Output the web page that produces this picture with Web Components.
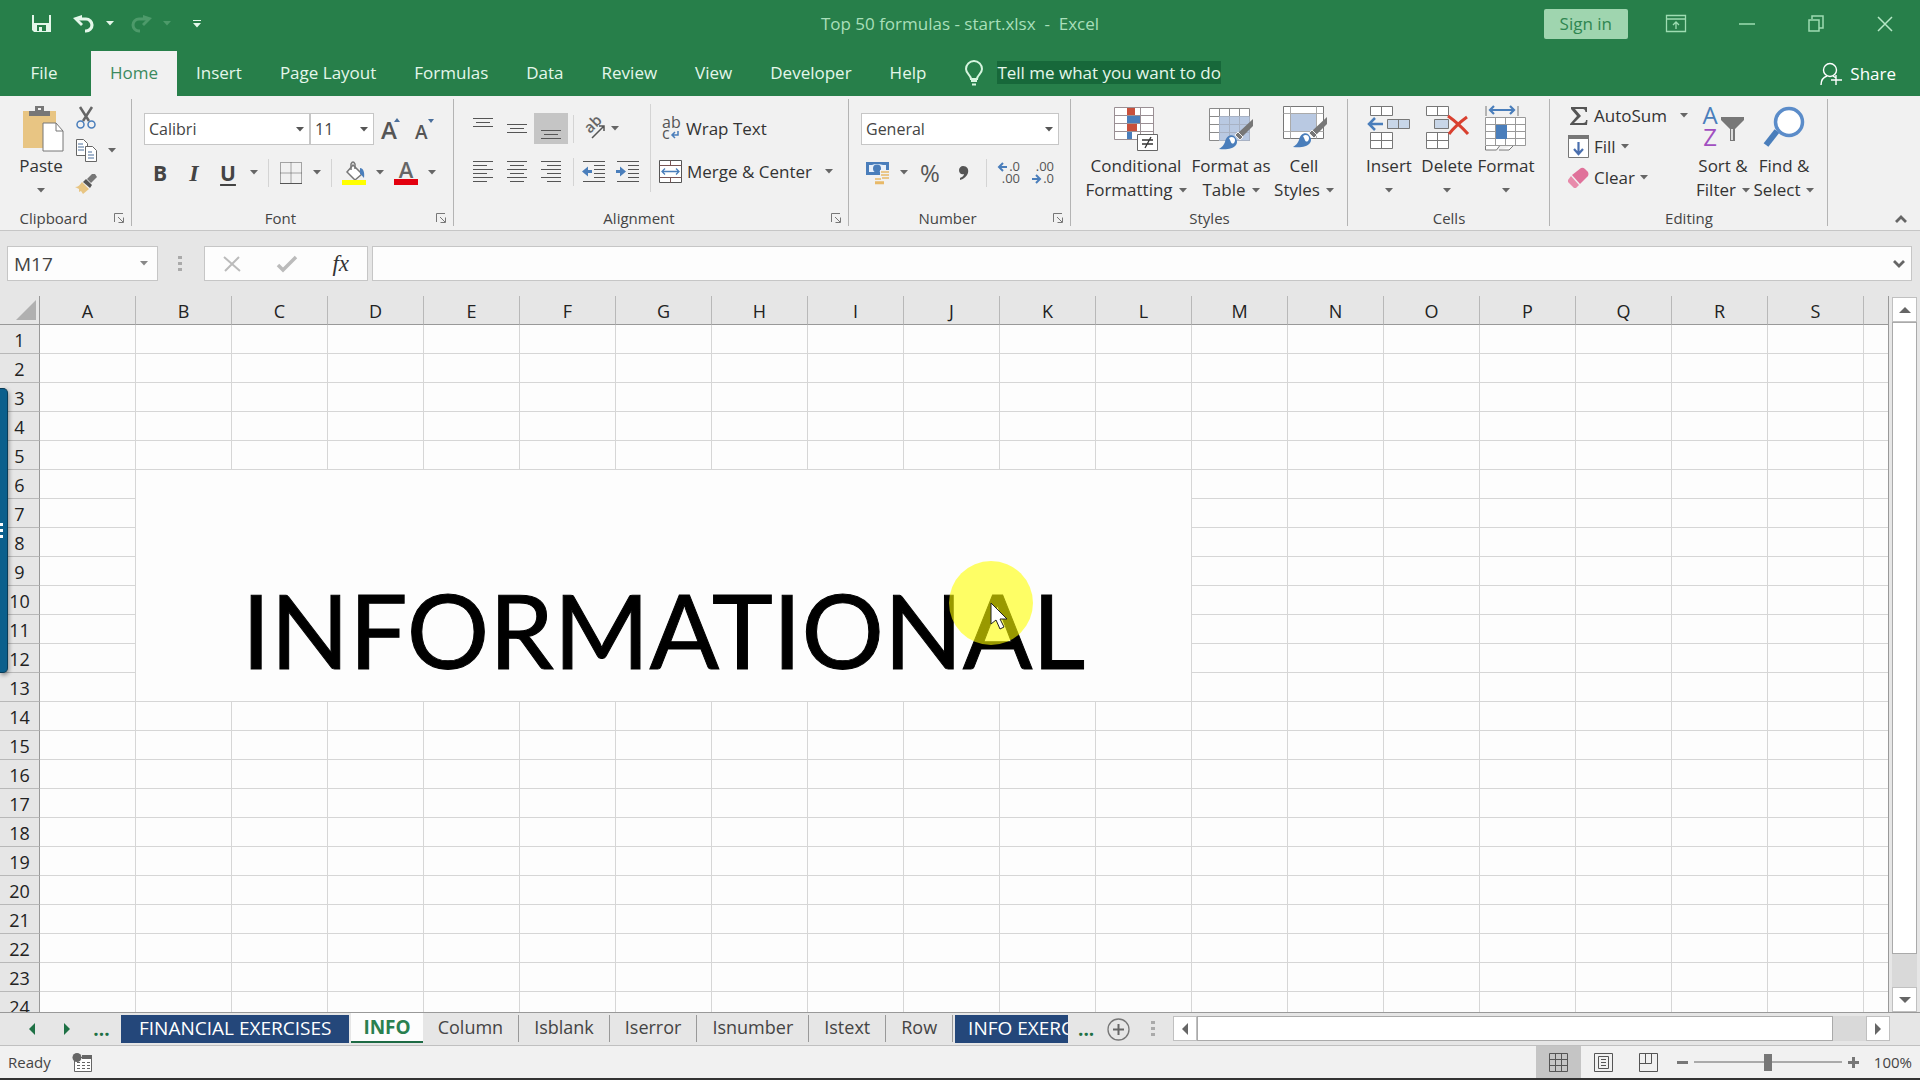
<!DOCTYPE html>
<html lang="en">
<head>
<meta charset="utf-8">
<title>Top 50 formulas - start.xlsx - Excel</title>
<style>
  :root {
    --green: #277f4a;
    --ribbon: #f1f1f1;
    --chrome: #e6e6e6;
    --ink: #333;
    --line: #c6c6c6;
    --ui: "Open Sans", "Noto Sans", sans-serif;
  }
  body {
    margin: 0;
    height: 100vh;
    overflow: hidden;
    font-family: var(--ui);
    font-size: 17px;
    color: var(--ink);
  }
</style>
</head>
<body>
<excel-window></excel-window>

<script>
const grid = (x, y, w, h, cols, rows) => {
  let d = `M${x} ${y}h${w}v${h}h${-w}z`;
  for (let i = 1; i < cols; i++) d += `M${x + (w / cols) * i} ${y}v${h}`;
  for (let i = 1; i < rows; i++) d += `M${x} ${y + (h / rows) * i}h${w}`;
  return d;
};

const lines = (list) =>
  `<path d="${list.map(([x, y, w]) => `M${x} ${y}h${w}`).join("")}" stroke="#555" fill="none"/>`;

const brush = `
  <path d="M42 12v7L31 30l-4-4z" fill="#777"/>
  <path d="M27 25l5 5-3 3-5-5z" fill="#777" stroke="#f1f1f1"/>
  <path d="M23 29c-4-2-8 1-9 6-1 3-3 5-6 7 7 1 14 0 17-4 2-3 1-6-2-9z" fill="#4a7ebb"/>
  <path d="M18 31c4-3 8 1 5 5-3 2-3-2-5-5z" fill="#fff"/>`;

// name: [width, height, markup]
const icons = {
  caret: [8, 5, `<path d="M0 0h8L4 4.5z" fill="currentColor"/>`],
  save: [19, 17, `<path fill-rule="evenodd" fill="#e4f7ea" d="M0 0h2v8h15V0h2v17H2l-2-2zM5 10v6h2v-4h3v4h4v-6z"/>`],
  undo: [22, 18, `<path d="M5 4h8a5.500 5.500 0 0 1 0 12h-1" fill="none" stroke="#e4f7ea" stroke-width="3.200"/><path d="M0 3L9 0v3l-3 2 4 4-2 2z" fill="#e4f7ea"/>`],
  redo: [22, 18, `<path d="M17 4H9a5.500 5.500 0 0 0 0 12h1" fill="none" stroke="#4d9a6a" stroke-width="3"/><path d="M22 3l-9-3v3l3 2-4 4 2 2z" fill="#4d9a6a"/>`],
  customize: [8, 8, `<path d="M0 0h8v1H0zM0 3h8L4 7.500z" fill="#e4f7ea"/>`],
  display: [20, 17, `<path d="M.5.5h19v16H.5zM.5 4h19M10 14V7M7 10l3-3 3 3" fill="none" stroke="#9edcb2" stroke-width="1.300"/>`],
  minimize: [16, 2, `<path d="M0 1h16" stroke="#9edcb2" stroke-width="1.500"/>`],
  restore: [16, 17, `<path d="M1 5h10v11H1zM4 4V1h11v12h-4" fill="none" stroke="#9edcb2" stroke-width="1.500"/>`],
  close: [16, 16, `<path d="M1 1l14 14M15 1L1 15" stroke="#b6e8c6" stroke-width="1.500"/>`],
  bulb: [20, 26, `<path d="M7 19c0-4-5-5-5-10a8 8 0 0 1 16 0c0 5-5 6-5 10z" fill="none" stroke="#d6f5df" stroke-width="2"/><path d="M7 21h6M8 24.500h4" stroke="#d6f5df" stroke-width="2"/>`],
  share: [22, 24, `<circle cx="10" cy="8" r="6.500" fill="none" stroke="#fff" stroke-width="1.400"/><path d="M1 23c0-5 3-8 6-9M13 14l3 2M16 13v10M11 18h11" fill="none" stroke="#fff" stroke-width="1.400"/>`],

  paste: [44, 46, `
    <path d="M4 5h33v37H4z" fill="#e8c583"/>
    <path d="M10 5h6V0h9v5h6v5H10z" fill="#777"/><path d="M19 2h3v2h-3z" fill="#f1f1f1"/>
    <path d="M24 17h13l7 8v20H24z" fill="#fff" stroke="#777"/><path d="M37 17v8h7" fill="none" stroke="#777"/>`],
  cut: [20, 22, `<path d="M4 0l9 14M16 0L7 14" stroke="#666" stroke-width="2.500"/><circle cx="4.500" cy="17.500" r="3.500" fill="none" stroke="#4a7ebb" stroke-width="1.500"/><circle cx="15.500" cy="17.500" r="3.500" fill="none" stroke="#4a7ebb" stroke-width="1.500"/>`],
  copy: [21, 23, `<g fill="#fff" stroke="#666"><path d="M.5.5h7l4 4v12H.5z"/><path d="M9.500 7.500h7l4 4v11h-11z"/></g><path d="M2 5h5M2 8h6M2 11h6M12 13h4M12 16h6M12 19h6" stroke="#4a6f9c"/>`],
  painter: [22, 20, `<path d="M17 0h3l2 3-6 6-4-4z" fill="#777"/><path d="M11 5l6 6-2 3-7-6z" fill="#555"/><path d="M7 8l7 7-6 5-2-3-2 1v-3l-4-2c3 0 5-2 7-5z" fill="#e8c583"/>`],
  grow: [20, 24, `<text x="0" y="22" font-size="24" font-weight="600" fill="#555">A</text><path d="M13 5h6l-3-4z" fill="#4a6f9c"/>`],
  shrink: [20, 24, `<text x="0" y="22" font-size="19" font-weight="600" fill="#555">A</text><path d="M13 2h6l-3 4z" fill="#4a6f9c"/>`],
  borders: [22, 22, `<path d="${grid(.5, .5, 21, 21, 2, 2)}" fill="none" stroke="#555" stroke-dasharray="1 1"/><path d="M0 21.500h22" stroke="#555"/>`],
  fill: [26, 24, `
    <path d="M12 4l9 9-7 6-8-8z" fill="#fff" stroke="#777" stroke-width="1.500"/>
    <path d="M10 9V3q2-4 4 0v5" fill="none" stroke="#777" stroke-width="1.500"/>
    <path d="M19 7c3 0 5 4 4 10-2-2-3-4-4-4z" fill="#4a7ebb"/><path d="M1 19h24v5H1z" fill="#ff0"/>`],
  color: [24, 24, `<text x="12" y="17" text-anchor="middle" font-size="22" font-weight="600" fill="#666">A</text><path d="M0 18h24v6H0z" fill="#e3000f"/>`],
  top: [22, 26, lines([[1, 2.5, 20], [4, 6.5, 14], [1, 10.5, 20]])],
  middle: [22, 26, lines([[1, 8.5, 20], [4, 12.5, 14], [1, 16.5, 20]])],
  bottom: [22, 26, lines([[1, 14.5, 20], [4, 18.5, 14], [1, 22.5, 20]])],
  left: [22, 22, lines([[1, .5, 20], [1, 4.5, 14], [1, 8.5, 20], [1, 12.5, 14], [1, 16.5, 20], [1, 20.5, 14]])],
  center: [22, 22, lines([[1, .5, 20], [4, 4.5, 14], [1, 8.5, 20], [4, 12.5, 14], [1, 16.5, 20], [4, 20.5, 14]])],
  right: [22, 22, lines([[1, .5, 20], [7, 4.5, 14], [1, 8.5, 20], [7, 12.5, 14], [1, 16.5, 20], [7, 20.5, 14]])],
  orient: [22, 20, `<text transform="translate(6 15) rotate(-45)" font-size="15" font-weight="600" fill="#666">ab</text><path d="M8 19L20 7M15 7h5v5" fill="none" stroke="#555" stroke-width="1.500"/>`],
  outdent: [24, 22, lines([[1, .5, 22], [12, 4.5, 11], [12, 8.5, 11], [12, 12.5, 11], [12, 16.5, 11], [1, 20.5, 22]]) + `<path d="M0 10.500l6-5v3.500h4v3H6v3.500z" fill="#4a7ebb"/>`],
  indent: [24, 22, lines([[1, .5, 22], [12, 4.5, 11], [12, 8.5, 11], [12, 12.5, 11], [12, 16.5, 11], [1, 20.5, 22]]) + `<path d="M10 10.500l-6-5v3.500H0v3h4v3.500z" fill="#4a7ebb"/>`],
  wrap: [22, 24, `<g font-size="16" fill="#555"><text x="3" y="11">ab</text><text x="3" y="22">c</text></g><path d="M19 14v4h-6M16 15l-3 3 3 3" fill="none" stroke="#4a7ebb" stroke-width="1.500"/>`],
  merge: [23, 23, `<path d="M.5.5h22v22H.5z" fill="#fff" stroke="#555"/><path d="M.5 5.500h22M.5 17.500h22M11.500.5v5M11.500 17.500v5" stroke="#7a5555"/><path d="M3 11.500h17M6 8.500l-3 3 3 3M17 8.500l3 3-3 3" fill="none" stroke="#4a7ebb" stroke-width="1.300"/>`],
  money: [24, 22, `<path d="M0 0h23v13H0z" fill="#4a7ebb"/><path d="M3 3h3q4-2 11 0h3v7H3z" fill="#e8f0fa"/><circle cx="11" cy="6.500" r="4" fill="#4a7ebb"/><path d="M14 8h10v14H9v-6h5z" fill="#f1f1f1"/><path d="M15 10h8M15 13h8M9 17h6M16 16h7M9 20h9M9 21.500h9" stroke="#e8b968" stroke-width="1.700"/>`],
  comma: [12, 14, `<path d="M5 0c4 0 6 3 5 7-1 3-4 6-8 7v-2c2-1 4-2 4-4-3 1-5-1-5-4 0-2 2-4 4-4z" fill="#555"/>`],
  moredec: [24, 24, `<g font-size="13" fill="#555" text-anchor="end"><text x="23" y="10">.0</text><text x="23" y="22">.00</text></g><path d="M10 6H3M6 2L2 6l4 4" fill="none" stroke="#4a7ebb" stroke-width="2"/>`],
  lessdec: [24, 24, `<g font-size="13" fill="#555" text-anchor="end"><text x="23" y="10">.00</text><text x="23" y="22">.0</text></g><path d="M1 18h7M5 14l4 4-4 4" fill="none" stroke="#4a7ebb" stroke-width="2"/>`],
  conditional: [44, 45, `
    <path d="${grid(.5, 1.5, 39, 32, 3, 4)}" fill="#fff" stroke="#9a8f94"/>
    <path d="M13 2h8v7h-8zM13 18h10v7H13z" fill="#c8503c"/><path d="M13 10h13v7H13zM13 26h5v7h-5z" fill="#4a7ebb"/>
    <path d="M23.500 28.500h20v16h-20z" fill="#fff" stroke="#666"/>
    <path d="M28 34h11M28 38h11M37 31l-6 11" stroke="#333" stroke-width="1.300"/>`],
  fortable: [46, 44, `<path d="${grid(1.5, 2.5, 40, 32, 4, 4)}" fill="#fff" stroke="#8a8a8a"/><path d="M11 11h30v24H11z" fill="#b9c9e2"/><path d="${grid(11.5, 10.5, 30, 24, 3, 3)}" fill="none" stroke="#a8b2c4"/><g transform="translate(3 1)">${brush}</g>`],
  cellstyles: [46, 44, `<path d="M2.500.5h40v32h-40z" fill="#fff" stroke="#777"/><path d="M9.500.5v32M35.500.5v32M2.500 7.500h40M2.500 25.500h40" stroke="#aaa"/><path d="M10 8h25v17H10z" fill="#b9c9e2"/><g transform="translate(4 -1)">${brush}</g>`],
  insert: [44, 44, `<path d="${grid(3.5, .5, 22, 9, 2, 1)}${grid(3.5, 26.5, 22, 16, 2, 2)}" fill="#fff" stroke="#777"/><path d="${grid(20.5, 13.5, 22, 9, 2, 1)}" fill="#c8d6e8" stroke="#777"/><path d="M16 18H3M8 12l-6 6 6 6" fill="none" stroke="#4a7ebb" stroke-width="2.500"/>`],
  delete: [44, 44, `<path d="${grid(1.5, .5, 22, 9, 2, 1)}${grid(1.5, 26.5, 22, 16, 2, 2)}" fill="#fff" stroke="#777"/><path d="M9.500 13.500h14v9h-14z" fill="#c8d6e8" stroke="#777"/><path d="M23 10q10 7 20 18M42 11Q31 19 24 28" fill="none" stroke="#d9402f" stroke-width="3"/>`],
  format: [42, 46, `<path d="${grid(.5, 11.5, 40, 28, 4, 4)}" fill="#fff" stroke="#999"/><path d="M11 19h11v14H11z" fill="#4a7ebb"/><path d="M1 0v10M33 0v10" stroke="#777"/><path d="M5 4h24M9 0L5 4l4 4M25 0l4 4-4 4" fill="none" stroke="#4a7ebb" stroke-width="2.200"/><path d="M.5 40v4h11l3-4M14 44h10l4-4" fill="#fff" stroke="#777"/>`],
  sum: [21, 20, `<path d="M3 1h16v5h-1.500Q17 3 15 3H7l6 7-7 7h9q3 0 3-3h1.500L19 19H2v-1l7-8L3 3z" fill="#555"/>`],
  filldown: [21, 23, `<path d="M.5.5h20v22H.5z" fill="#fff" stroke="#777"/><path d="M0 0h21v4H0z" fill="#777"/><path d="M10.500 7v12M6 14l4.500 5 4.500-5" fill="none" stroke="#4a6fae" stroke-width="2.200"/>`],
  eraser: [21, 20, `<path d="M13 0q2-1 4 1l3 3q1 2 0 4l-8 8-8-9z" fill="#e0719a"/><path d="M3 8l8 9-3 3H6l-6-6v-2z" fill="#e88bab"/>`],
  sort: [42, 42, `<g text-anchor="middle" font-size="24"><text x="8" y="18" fill="#4a7ebb">A</text><text x="8" y="40" fill="#a14fc0">Z</text></g><path d="M19 11h23v3l-9 9v12h-5V23l-9-9z" fill="#777"/><path d="M29 23h2v11h-2z" fill="#ddd"/>`],
  find: [42, 42, `<path d="M14 25L3 39" stroke="#4a7ebb" stroke-width="6"/><circle cx="26" cy="16" r="13.500" fill="#fff" stroke="#5b8cc9" stroke-width="3.500"/>`],
  collapse: [14, 9, `<path d="M2 8l5-5 5 5" fill="none" stroke="#666" stroke-width="2.800"/>`],
  expand: [12, 9, `<path d="M1 2l5 5 5-5" fill="none" stroke="#666" stroke-width="2.800"/>`],
  launcher: [11, 10, `<path d="M.5 9V.5H9M4 4l5 5M9.500 4.500v5h-5" fill="none" stroke="#777"/>`],

  cancel: [18, 16, `<path d="M1 1l16 14M16 1L2 15" stroke="#bbb" stroke-width="2"/>`],
  check: [20, 16, `<path d="M1 9l5 5L19 1" fill="none" stroke="#bbb" stroke-width="3.500"/>`],
  dots: [4, 16, `<path d="M0 0h4v3H0zM0 6h4v3H0zM0 12h4v3H0z" fill="#aaa"/>`],
  prev: [6, 12, `<path d="M6 0v12L0 6z" fill="currentColor"/>`],
  next: [6, 12, `<path d="M0 0v12l6-6z" fill="currentColor"/>`],
  up: [12, 6, `<path d="M0 6h12L6 0z" fill="currentColor"/>`],
  down: [12, 6, `<path d="M0 0h12L6 6z" fill="currentColor"/>`],
  plus: [23, 23, `<circle cx="11.500" cy="11.500" r="10.500" fill="none" stroke="#777" stroke-width="1.300"/><path d="M6 11.500h11M11.500 6v11" stroke="#666" stroke-width="2"/>`],
  macro: [20, 19, `<path d="M2.500 4.500h17v14h-17z" fill="#fff" stroke="#666"/><path d="M10 2h10v4H10z" fill="#666"/><circle cx="5" cy="4.500" r="4.500" fill="#666"/><path d="M5 9.500h13M5 12.500h13M5 15.500h13" stroke="#666" stroke-dasharray="3 2"/>`],
  normal: [19, 19, `<path d="${grid(.5, .5, 18, 18, 3, 3)}" fill="none" stroke="#555"/>`],
  page: [19, 19, `<path d="M.5.5h18v18H.5zM4.500 3.500h10v12h-10zM7 6.500h5M7 9.500h5M7 12.500h5" fill="none" stroke="#555"/>`],
  breaks: [19, 19, `<path d="M.5.5h18v18H.5zM.5 10.500h12M6.500.5v10M12.500.5v10" fill="none" stroke="#555"/>`],
  minus: [11, 3, `<path d="M0 0h11v3H0z" fill="#777"/>`],
  add: [11, 11, `<path d="M0 4h11v3H0zM4 0h3v11H4z" fill="#777"/>`],
  pointer: [18, 28, `<path d="M1 1v21l5-4 4 9 4-2-4-8h7z" fill="#fff" stroke="#222"/>`],
};

class BaseElement extends HTMLElement {
  constructor() {
    super();
    this.attachShadow({ mode: "open" });
  }

  connectedCallback() {
    this.shadowRoot.innerHTML = this.render();
  }

  attr(name, fallback = "") {
    return this.getAttribute(name) ?? fallback;
  }
}

class UiIcon extends BaseElement {
  render() {
    const [w, h, body] = icons[this.attr("name")];
    return /* HTML */ `
      <style>
        :host { display: inline-flex; flex: none; }
        svg { display: block; overflow: visible; font-family: var(--ui); }
      </style>
      <svg width="${w}" height="${h}" viewBox="0 0 ${w} ${h}" aria-hidden="true">${body}</svg>
    `;
  }
}

const buttonReset = `
  button {
    margin: 0;
    padding: 0;
    border: 0;
    background: none;
    color: inherit;
    font: inherit;
    line-height: 24px;
    white-space: nowrap;
  }`;

/* Small ribbon button: icon and/or slotted text, optional caret */
class ToolButton extends BaseElement {
  render() {
    const icon = this.attr("icon");
    return /* HTML */ `
      <style>
        :host { display: flex; flex: none; width: 34px; height: 31px; }
        :host([narrow]) { width: 18px; }
        :host([wide]) { width: auto; }
        ${buttonReset}
        button { flex: 1; display: flex; align-items: center; justify-content: center; gap: 5px; }
        :host([pressed]) button { background: #c5c5c5; }
        .caret { color: #666; }
      </style>
      <button aria-label="${this.attr("label")}">
        ${icon ? `<ui-icon name="${icon}"></ui-icon>` : ""}
        <slot></slot>
        ${this.hasAttribute("caret") ? `<ui-icon class="caret" name="caret"></ui-icon>` : ""}
      </button>
    `;
  }
}

/* Tall ribbon button: icon over two lines, the second ends in a caret */
class BigButton extends BaseElement {
  render() {
    return /* HTML */ `
      <style>
        :host { display: flex; flex: none; }
        ${buttonReset}
        button { flex: 1; display: flex; flex-direction: column; align-items: center; padding-top: 10px; }
        .art { display: flex; align-items: flex-start; justify-content: center; height: 48px; }
        .second { display: flex; align-items: center; gap: 6px; height: 24px; }
        .caret { color: #666; }
      </style>
      <button>
        <span class="art"><ui-icon name="${this.attr("icon")}"></ui-icon></span>
        <slot></slot>
        <span class="second"><slot name="second"></slot><ui-icon class="caret" name="caret"></ui-icon></span>
      </button>
    `;
  }
}

class DropBox extends BaseElement {
  render() {
    return /* HTML */ `
      <style>
        :host { display: flex; position: relative; height: 32px; box-sizing: border-box; border: 1px solid var(--line); background: #fff; font-size: 16px; }
        select { flex: 1; min-width: 0; appearance: none; border: 0; padding: 0 4px; background: none; color: #444; font: inherit; }
        ui-icon { position: absolute; right: 5px; top: 13px; color: #555; pointer-events: none; }
      </style>
      <select aria-label="${this.attr("label")}"><option>${this.attr("value")}</option></select>
      <ui-icon name="caret"></ui-icon>
    `;
  }
}

class RibbonGroup extends BaseElement {
  render() {
    return /* HTML */ `
      <style>
        :host { display: flex; flex-direction: column; flex: none; box-sizing: border-box; position: relative; }
        :host::after { content: ""; position: absolute; right: 0; top: 3px; bottom: 4px; border-right: 1px solid #b4b4b4; }
        .body { flex: 1; display: flex; }
        footer { display: flex; align-items: center; height: 25px; font-size: 15px; color: #444; }
        .name { flex: 1; text-align: center; }
        ${buttonReset}
        button { display: flex; margin: 0 7px; }
      </style>
      <div class="body"><slot></slot></div>
      <footer>
        <span class="name">${this.attr("label")}</span>
        ${this.hasAttribute("launcher")
          ? `<button aria-label="${this.attr("label")} settings"><ui-icon name="launcher"></ui-icon></button>`
          : ""}
      </footer>
    `;
  }
}

class TitleBar extends BaseElement {
  render() {
    return /* HTML */ `
      <style>
        :host { display: grid; grid-template-columns: 1fr auto 1fr; align-items: center; height: 51px; padding: 0 27px 4px; box-sizing: border-box; color: #a9dfba; }
        ${buttonReset}
        button { display: flex; align-items: center; }
        .quick { display: flex; align-items: center; padding-left: 5px; color: #e4f7ea; }
        .quick .gap { margin-left: 22px; }
        .quick .drop { margin-left: 11px; }
        .quick .redo { margin-left: 16px; }
        .quick .off { color: #4d9a6a; }
        .title { white-space: pre; }
        .window { display: flex; justify-content: flex-end; align-items: center; gap: 53px; }
        .sign { height: 30px; padding: 0 16px; background: #9fd5af; color: #2f8651; border-radius: 2px; }
        .first { margin-left: -15px; }
      </style>
      <div class="quick">
        <button aria-label="Save"><ui-icon name="save"></ui-icon></button>
        <button class="gap" aria-label="Undo"><ui-icon name="undo"></ui-icon></button>
        <button class="drop" aria-label="Undo list"><ui-icon name="caret"></ui-icon></button>
        <button class="redo off" aria-label="Redo"><ui-icon name="redo"></ui-icon></button>
        <button class="drop off" aria-label="Redo list"><ui-icon name="caret"></ui-icon></button>
        <button class="gap" aria-label="Customize Quick Access Toolbar"><ui-icon name="customize"></ui-icon></button>
      </div>
      <div class="title">Top 50 formulas - start.xlsx  -  Excel</div>
      <div class="window">
        <button class="sign">Sign in</button>
        <button class="first" aria-label="Ribbon display options"><ui-icon name="display"></ui-icon></button>
        <button aria-label="Minimize"><ui-icon name="minimize"></ui-icon></button>
        <button aria-label="Restore"><ui-icon name="restore"></ui-icon></button>
        <button aria-label="Close"><ui-icon name="close"></ui-icon></button>
      </div>
    `;
  }
}

class RibbonTabs extends BaseElement {
  render() {
    const tabs = ["Home", "Insert", "Page Layout", "Formulas", "Data", "Review", "View", "Developer", "Help"];
    return /* HTML */ `
      <style>
        :host { display: flex; height: 45px; color: #e4f7ea; }
        ${buttonReset}
        button { display: flex; align-items: center; padding: 0 19px 2px; }
        .file { width: 88px; margin-right: 3px; justify-content: center; padding: 0 0 2px; }
        .on { background: var(--ribbon); color: #3c8a5e; }
        .tell { gap: 13px; }
        .tell span { background: #17683a; line-height: 23px; }
        .share { margin-left: auto; gap: 8px; padding: 0 24px 0 0; color: #fff; }
      </style>
      <button class="file">File</button>
      ${tabs.map((t, i) => `<button class="${i ? "" : "on"}">${t}</button>`).join("")}
      <button class="tell"><ui-icon name="bulb"></ui-icon><span>Tell me what you want to do</span></button>
      <button class="share"><ui-icon name="share"></ui-icon>Share</button>
    `;
  }
}

class RibbonHome extends BaseElement {
  render() {
    return /* HTML */ `
      <style>
        ${buttonReset}
        :host { display: flex; height: 134px; background: var(--ribbon); border-bottom: 1px solid var(--line); color: #333; }
        .col { display: flex; flex-direction: column; }
        .row { display: flex; align-items: center; }
        .two { gap: 12px; padding: 17px 0 0 12px; }
        .font { padding-left: 11px; }
        .three { padding-top: 4px; }
        .three .row { height: 31px; }
        .clip { padding-top: 5px; margin-left: -13px; }
        .clip .row { height: 33px; }
        .sep { flex: none; width: 1px; height: 28px; margin: 0 5px; background: #d4d4d4; }
        .tall { flex: none; width: 1px; height: 88px; margin-top: 8px; background: #d4d4d4; }
        .text { padding-left: 8px; align-items: flex-start; }
        .font .row:first-child { padding-left: 1px; }
        .char { font-size: 21px; font-weight: 700; color: #444; }
        .i { font-family: "Liberation Serif", serif; font-style: italic; font-size: 24px; }
        .u { text-decoration: underline; text-underline-offset: 3px; text-decoration-thickness: 2px; }
        .percent { font-size: 24px; color: #555; }
        .collapse { display: flex; margin: auto 12px 7px auto; }
      </style>

      <ribbon-group label="Clipboard" launcher style="width:132px">
        <big-button icon="paste" style="width:82px">Paste</big-button>
        <div class="col three clip">
          <div class="row"><tool-button icon="cut" label="Cut"></tool-button></div>
          <div class="row"><tool-button icon="copy" label="Copy"></tool-button><tool-button narrow caret label="Copy options"></tool-button></div>
          <div class="row"><tool-button icon="painter" label="Format Painter"></tool-button></div>
        </div>
      </ribbon-group>

      <ribbon-group label="Font" launcher style="width:322px">
        <div class="col two font">
          <div class="row">
            <drop-box label="Font" value="Calibri" style="width:166px"></drop-box>
            <drop-box label="Font size" value="11" style="width:64px"></drop-box>
            <tool-button icon="grow" label="Increase font size"></tool-button>
            <tool-button icon="shrink" label="Decrease font size"></tool-button>
          </div>
          <div class="row">
            <tool-button label="Bold"><span class="char">B</span></tool-button>
            <tool-button label="Italic"><span class="char i">I</span></tool-button>
            <tool-button label="Underline"><span class="char u">U</span></tool-button>
            <tool-button narrow caret label="Underline style"></tool-button>
            <span class="sep"></span>
            <tool-button icon="borders" label="Borders"></tool-button>
            <tool-button narrow caret label="Border style"></tool-button>
            <span class="sep"></span>
            <tool-button icon="fill" label="Fill color"></tool-button>
            <tool-button narrow caret label="Fill colors"></tool-button>
            <tool-button icon="color" label="Font color"></tool-button>
            <tool-button narrow caret label="Font colors"></tool-button>
          </div>
        </div>
      </ribbon-group>

      <ribbon-group label="Alignment" launcher style="width:395px">
        <div class="col two" style="width:184px">
          <div class="row">
            <tool-button icon="top" label="Top align"></tool-button>
            <tool-button icon="middle" label="Middle align"></tool-button>
            <tool-button icon="bottom" pressed label="Bottom align"></tool-button>
            <span class="sep"></span>
            <tool-button wide icon="orient" caret label="Orientation" style="margin-left:5px"></tool-button>
          </div>
          <div class="row">
            <tool-button icon="left" label="Align left"></tool-button>
            <tool-button icon="center" label="Center"></tool-button>
            <tool-button icon="right" label="Align right"></tool-button>
            <span class="sep" style="margin-right:3px"></span>
            <tool-button icon="outdent" label="Decrease indent"></tool-button>
            <tool-button icon="indent" label="Increase indent"></tool-button>
          </div>
        </div>
        <span class="tall"></span>
        <div class="col two text">
          <tool-button wide icon="wrap" label="Wrap Text">Wrap Text</tool-button>
          <div class="row"><tool-button wide icon="merge" label="Merge &amp; Center">Merge &amp; Center</tool-button><tool-button caret label="Merge options"></tool-button></div>
        </div>
      </ribbon-group>

      <ribbon-group label="Number" launcher style="width:222px">
        <div class="col two">
          <drop-box label="Number format" value="General" style="width:198px"></drop-box>
          <div class="row">
            <tool-button icon="money" label="Accounting format"></tool-button>
            <tool-button narrow caret label="Currencies"></tool-button>
            <tool-button label="Percent style"><span class="percent">%</span></tool-button>
            <tool-button icon="comma" label="Comma style"></tool-button>
            <span class="sep"></span>
            <tool-button icon="moredec" label="Increase decimal"></tool-button>
            <tool-button icon="lessdec" label="Decrease decimal"></tool-button>
          </div>
        </div>
      </ribbon-group>

      <ribbon-group label="Styles" style="width:277px">
        <big-button icon="conditional" style="width:108px;margin-left:11px">Conditional<span slot="second">Formatting</span></big-button>
        <big-button icon="fortable" style="width:82px">Format as<span slot="second">Table</span></big-button>
        <big-button icon="cellstyles" style="width:64px">Cell<span slot="second">Styles</span></big-button>
      </ribbon-group>

      <ribbon-group label="Cells" style="width:202px">
        <big-button icon="insert" style="width:58px;margin-left:12px">Insert</big-button>
        <big-button icon="delete" style="width:58px">Delete</big-button>
        <big-button icon="format" style="width:60px">Format</big-button>
      </ribbon-group>

      <ribbon-group label="Editing" style="width:278px">
        <div class="col three" style="width:144px;padding-left:18px;box-sizing:border-box">
          <div class="row"><tool-button wide icon="sum" label="AutoSum">AutoSum</tool-button><tool-button caret label="AutoSum options"></tool-button></div>
          <div class="row"><tool-button wide caret icon="filldown" label="Fill">Fill</tool-button></div>
          <div class="row"><tool-button wide caret icon="eraser" label="Clear">Clear</tool-button></div>
        </div>
        <big-button icon="sort" style="width:58px">Sort &amp;<span slot="second">Filter</span></big-button>
        <big-button icon="find" style="width:64px">Find &amp;<span slot="second">Select</span></big-button>
      </ribbon-group>

      <button class="collapse" aria-label="Collapse the ribbon"><ui-icon name="collapse"></ui-icon></button>
    `;
  }
}

class FormulaBar extends BaseElement {
  render() {
    return /* HTML */ `
      <style>
        :host { display: flex; align-items: center; height: 65px; padding: 0 8px 0 7px; }
        .box { display: flex; align-items: center; height: 35px; box-sizing: border-box; border: 1px solid var(--line); background: #fdfdfd; }
        .name { width: 151px; padding-right: 9px; }
        input { flex: 1; min-width: 0; padding: 0 6px; border: 0; outline: 0; background: none; color: #444; font: inherit; font-size: 19px; }
        .dots { margin: 0 22px 0 20px; }
        .tools { width: 164px; justify-content: space-around; }
        .formula { flex: 1; margin-left: 4px; padding-right: 6px; }
        .fx { font: italic 23px "Liberation Serif", serif; color: #333; }
        ${buttonReset}
        button { display: flex; }
      </style>
      <div class="box name">
        <input aria-label="Name Box" value="M17">
        <button aria-label="Names" style="color:#888"><ui-icon name="caret"></ui-icon></button>
      </div>
      <ui-icon class="dots" name="dots"></ui-icon>
      <div class="box tools">
        <button aria-label="Cancel"><ui-icon name="cancel"></ui-icon></button>
        <button aria-label="Enter"><ui-icon name="check"></ui-icon></button>
        <button aria-label="Insert Function"><span class="fx">fx</span></button>
      </div>
      <div class="box formula">
        <input aria-label="Formula Bar">
        <button aria-label="Expand formula bar"><ui-icon name="expand"></ui-icon></button>
      </div>
    `;
  }
}

class ScrollBar extends BaseElement {
  render() {
    const vertical = this.hasAttribute("vertical");
    return /* HTML */ `
      <style>
        :host { display: flex; height: 25px; }
        :host([vertical]) { flex-direction: column; width: 25px; height: auto; }
        ${buttonReset}
        button { flex: none; display: flex; align-items: center; justify-content: center; width: 24px; height: 25px; box-sizing: border-box; border: 1px solid #c0c0c0; background: #fff; color: #666; }
        :host([vertical]) button { width: 25px; }
        .track { flex: 1; display: flex; flex-direction: inherit; background: #d9d9d9; }
        .thumb { flex: 0 0 95%; box-sizing: border-box; border: 1px solid #aaa; background: #fff; }
      </style>
      <button aria-label="Scroll back"><ui-icon name="${vertical ? "up" : "prev"}"></ui-icon></button>
      <div class="track"><div class="thumb"></div></div>
      <button aria-label="Scroll forward"><ui-icon name="${vertical ? "down" : "next"}"></ui-icon></button>
    `;
  }
}

class SheetGrid extends BaseElement {
  rows() {
    let html = "";
    for (let r = 1; r <= 24; r++) {
      let cells = "";
      for (let c = 0; c < 20; c++) {
        const covered = r >= 6 && r <= 13 && c >= 1 && c <= 11;
        if (r === 6 && c === 1) {
          cells += `<td class="merged" colspan="11" rowspan="8"><slot></slot></td>`;
        } else if (!covered) {
          cells += "<td></td>";
        }
      }
      html += `<tr><th scope="row">${r}</th>${cells}</tr>`;
    }
    return html;
  }

  render() {
    const letters = [..."ABCDEFGHIJKLMNOPQRS"];
    return /* HTML */ `
      <style>
        :host { display: block; overflow: hidden; background: #fdfdfd; border-right: 1px solid #999; }
        table { width: 100%; table-layout: fixed; border-collapse: separate; border-spacing: 0; }
        col { width: 96px; }
        col.head { width: 40px; }
        col.rest { width: auto; }
        tr { height: 29px; }
        th, td { height: 29px; box-sizing: border-box; padding: 0; border: solid #d6d6d6; border-width: 0 1px 1px 0; }
        th { background: var(--chrome); color: #222; font-size: 18px; font-weight: 400; line-height: 26px; padding-top: 2px; text-align: center; border-color: #b8b8b8; }
        thead th { border-bottom-color: #999; }
        tbody th { border-right-color: #999; }
        tr > :last-child { border-right: 0; }
        .corner { background: var(--chrome); border-color: #999; }
        .corner svg { display: block; margin-left: 16px; }
        .merged {
          padding-bottom: 6px;
          vertical-align: bottom;
          text-align: center;
          color: #000;
          font: 103px/132px Lato, "Open Sans", sans-serif;
          -webkit-text-stroke: 1px #000;
          white-space: nowrap;
        }
      </style>
      <table>
        <colgroup><col class="head">${letters.map(() => "<col>").join("")}<col class="rest"></colgroup>
        <thead>
          <tr>
            <td class="corner"><svg width="20" height="20"><path d="M20 0v20H0z" fill="#b0b0b0"/></svg></td>
            ${letters.map((l) => `<th scope="col">${l}</th>`).join("")}
            <th></th>
          </tr>
        </thead>
        <tbody>${this.rows()}</tbody>
      </table>
    `;
  }
}

class SheetTabs extends BaseElement {
  render() {
    const sheets = ["Column", "Isblank", "Iserror", "Isnumber", "Istext", "Row"];
    return /* HTML */ `
      <style>
        :host { display: flex; height: 34px; box-sizing: border-box; border-top: 1px solid #999; border-bottom: 1px solid #c0c0c0; padding-right: 30px; color: #1e7145; font-size: 18px; }
        ${buttonReset}
        button { display: flex; align-items: center; justify-content: center; }
        .nav { flex: none; display: flex; width: 119px; padding-left: 14px; box-sizing: border-box; }
        .nav button { width: 35px; }
        .more { width: 35px; font-size: 19px; font-weight: 700; }
        .tab { flex: none; box-sizing: border-box; padding: 0 15px 3px; color: #444; border-right: 1px solid #999; height: 27px; margin-top: 2px; }
        .blue { background: #24477a; color: #fff; border: 0; height: 28px; margin: 2px 2px 0; padding: 0 18px 3px; font-size: 19px; }
        .on { background: #fdfdfd; color: #2a8050; font-size: 19px; font-weight: 700; margin-top: 0; height: 30px; padding: 0 12px; border: 0; border-bottom: 2px solid #1e6b45; }
        .clip { width: 113px; overflow: hidden; justify-content: flex-start; padding: 0 0 3px 13px; }
        .new { width: 30px; margin: 0 18px 0 1px; }
        .dots { align-self: center; margin-right: 18px; }
        scroll-bar { flex: 1; margin-top: 3px; }
      </style>
      <div class="nav">
        <button aria-label="Previous sheet"><ui-icon name="prev"></ui-icon></button>
        <button aria-label="Next sheet"><ui-icon name="next"></ui-icon></button>
        <button class="more">...</button>
      </div>
      <button class="tab blue">FINANCIAL EXERCISES</button>
      <button class="tab on">INFO</button>
      ${sheets.map((s) => `<button class="tab">${s}</button>`).join("")}
      <button class="tab blue clip">INFO EXERC</button>
      <button class="more" style="width:32px">...</button>
      <button class="new" aria-label="New sheet"><ui-icon name="plus"></ui-icon></button>
      <ui-icon class="dots" name="dots"></ui-icon>
      <scroll-bar></scroll-bar>
    `;
  }
}

class StatusBar extends BaseElement {
  render() {
    return /* HTML */ `
      <style>
        :host { display: flex; align-items: center; height: 32px; padding: 0 8px; background: var(--ribbon); border-bottom: 2px solid #333; font-size: 15px; color: #444; }
        ${buttonReset}
        button { display: flex; align-items: center; justify-content: center; }
        .macro { margin-left: 21px; }
        .views { display: flex; align-self: stretch; margin: 0 6px 0 auto; }
        .views button { width: 45px; }
        .views .on { background: #c5c5c5; }
        input { appearance: none; width: 148px; height: 18px; margin: 0 6px; background: linear-gradient(#aaa, #aaa) center / 100% 2px no-repeat; }
        input::-webkit-slider-thumb { appearance: none; width: 8px; height: 17px; background: #777; }
        .percent { width: 53px; text-align: right; }
      </style>
      <span>Ready</span>
      <button class="macro" aria-label="Record macro"><ui-icon name="macro"></ui-icon></button>
      <div class="views">
        <button class="on" aria-label="Normal"><ui-icon name="normal"></ui-icon></button>
        <button aria-label="Page Layout"><ui-icon name="page"></ui-icon></button>
        <button aria-label="Page Break Preview"><ui-icon name="breaks"></ui-icon></button>
      </div>
      <button aria-label="Zoom out"><ui-icon name="minus"></ui-icon></button>
      <input type="range" aria-label="Zoom" value="50">
      <button aria-label="Zoom in"><ui-icon name="add"></ui-icon></button>
      <span class="percent">100%</span>
    `;
  }
}

class ExcelWindow extends BaseElement {
  render() {
    return /* HTML */ `
      <style>
        :host { display: flex; flex-direction: column; height: 100vh; background: var(--chrome); position: relative; }
        header { background: var(--green); }
        main { flex: 1; min-height: 0; display: flex; padding-right: 3px; gap: 3px; }
        sheet-grid { flex: 1; min-width: 0; }
        scroll-bar { margin-top: 1px; }
        .drawer {
          position: absolute;
          left: 0;
          top: 388px;
          width: 8px;
          height: 285px;
          box-sizing: border-box;
          background: #0b5f8c;
          border: solid #083c58;
          border-width: 1px 1px 1px 0;
          border-radius: 0 5px 5px 0;
          box-shadow: 1px 2px 4px #0006;
          display: flex;
          align-items: center;
        }
        .drawer i { width: 3px; height: 15px; background: repeating-linear-gradient(#fff 0 3px, transparent 3px 6px); }
        .halo { position: absolute; left: 949px; top: 561px; width: 84px; height: 84px; border-radius: 50%; background: #ffff0099; }
        .pointer { position: absolute; left: 990px; top: 602px; }
      </style>
      <header>
        <title-bar></title-bar>
        <ribbon-tabs></ribbon-tabs>
      </header>
      <ribbon-home></ribbon-home>
      <formula-bar></formula-bar>
      <main>
        <sheet-grid>INFORMATIONAL</sheet-grid>
        <scroll-bar vertical></scroll-bar>
      </main>
      <sheet-tabs></sheet-tabs>
      <status-bar></status-bar>
      <div class="drawer"><i></i></div>
      <div class="halo"></div>
      <ui-icon class="pointer" name="pointer"></ui-icon>
    `;
  }
}

customElements.define("ui-icon", UiIcon);
customElements.define("tool-button", ToolButton);
customElements.define("big-button", BigButton);
customElements.define("drop-box", DropBox);
customElements.define("ribbon-group", RibbonGroup);
customElements.define("title-bar", TitleBar);
customElements.define("ribbon-tabs", RibbonTabs);
customElements.define("ribbon-home", RibbonHome);
customElements.define("formula-bar", FormulaBar);
customElements.define("scroll-bar", ScrollBar);
customElements.define("sheet-grid", SheetGrid);
customElements.define("sheet-tabs", SheetTabs);
customElements.define("status-bar", StatusBar);
customElements.define("excel-window", ExcelWindow);
</script>
</body>
</html>
